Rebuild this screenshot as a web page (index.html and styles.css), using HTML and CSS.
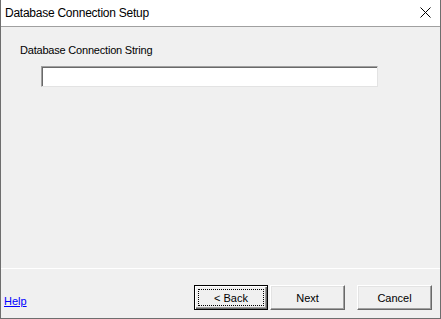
FILE: index.html
```html
<!DOCTYPE html>
<html lang="en">
<head>
    <meta charset="UTF-8">
    <title>Database Connection Setup</title>
    <link rel="stylesheet" href="styles.css">
</head>
<body>
    <div class="window">
        <div class="titlebar">
            <span class="title">Database Connection Setup</span>
            <svg class="close" width="11" height="11" viewBox="0 0 11 11">
                <path d="M0.5 0.5 L10.5 10.5 M10.5 0.5 L0.5 10.5" stroke="#000" stroke-width="1" fill="none"/>
            </svg>
        </div>
        <div class="content">
            <label class="field-label" for="connString">Database Connection String</label>
            <input class="field" type="text" id="connString">
        </div>
        <div class="footer">
            <a class="help" href="#">Help</a>
            <div class="buttons">
                <button class="btn default" type="button"><span class="focus">&lt; Back</span></button>
                <button class="btn" type="button">Next</button>
                <button class="btn cancel" type="button">Cancel</button>
            </div>
        </div>
    </div>
</body>
</html>
```

FILE: styles.css
```css
body {
    margin: 0;
    font-family: "Liberation Sans", Arial, sans-serif;
    font-size: 11px;
    color: #000;
}
.window {
    box-sizing: border-box;
    width: 441px;
    height: 319px;
    display: flex;
    flex-direction: column;
    border: 1px solid #6e6e6e;
    border-top: none;
    background-color: #f0f0f0;
}
.titlebar {
    box-sizing: border-box;
    height: 27px;
    display: flex;
    align-items: center;
    justify-content: space-between;
    padding: 0 9px 1px 4px;
    background-color: #fff;
    border-bottom: 1px solid #a0a0a0;
}
.title {
    font-size: 12px;
    letter-spacing: -0.25px;
}
.close {
    display: block;
}
.content {
    flex: 1;
    display: flex;
    flex-direction: column;
    align-items: flex-start;
    padding: 17px 0 0 19px;
    border-bottom: 1px solid #fff;
}
.field-label {
    line-height: 13px;
    letter-spacing: -0.2px;
}
.field {
    box-sizing: border-box;
    width: 337px;
    height: 21px;
    margin: 9px 0 0 21px;
    padding: 0;
    border: 1px solid;
    border-color: #a0a0a0 #e3e3e3 #e3e3e3 #a0a0a0;
    box-shadow: inset 1px 1px 0 #696969;
    background-color: #fff;
    outline: none;
}
.footer {
    box-sizing: border-box;
    height: 49px;
    display: flex;
    justify-content: space-between;
    align-items: flex-end;
    padding: 0 8px 8px 3px;
}
.help {
    color: #0000ff;
    line-height: 13px;
    margin-bottom: 2px;
}
.buttons {
    display: flex;
}
.btn {
    box-sizing: border-box;
    width: 75px;
    height: 25px;
    margin: 0 0 0 2px;
    padding: 0;
    font-family: inherit;
    font-size: 11px;
    color: #000;
    background-color: #f0f0f0;
    border: 1px solid;
    border-color: #fff #696969 #696969 #fff;
    box-shadow: inset -1px -1px 0 #a0a0a0, inset 1px 1px 0 #e3e3e3;
}
.btn.default {
    width: 74px;
    border: 1px solid #000;
    box-shadow: inset 1px 1px 0 #fff, inset -1px -1px 0 #696969, inset -2px -2px 0 #a0a0a0;
    padding: 3px;
}
.focus {
    display: flex;
    align-items: center;
    justify-content: center;
    height: 100%;
    box-sizing: border-box;
    border: 1px dotted #000;
}
.btn.cancel {
    margin-left: 12px;
}
```
